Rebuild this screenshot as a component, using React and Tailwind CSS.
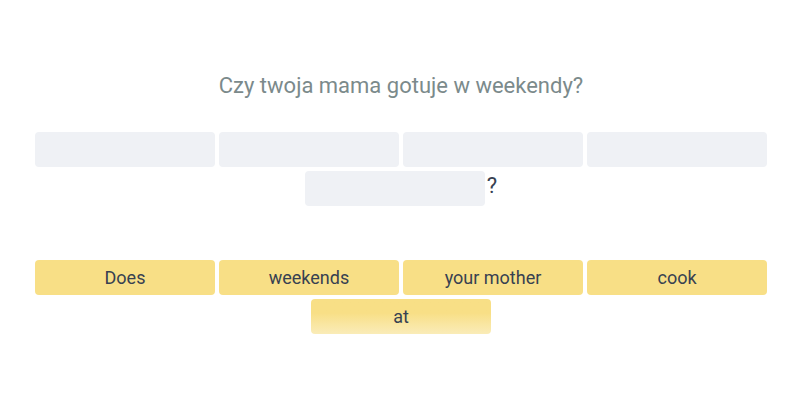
const SLOT_CLASS = "h-[35px] w-[180px] rounded-[4px] bg-[#eff1f5]";

const WORD_CLASS =
  "flex h-[35px] w-[180px] items-center justify-center rounded-[4px] text-[18px] text-[#374151]";

const words = ["Does", "weekends", "your mother", "cook"];

export default function App() {
  return (
    <div
      className="h-[400px] w-[800px] bg-white pl-[35px] pr-[33px]"
      style={{ fontFamily: "Roboto, 'Noto Sans', sans-serif" }}
    >
      <div className="pt-[71px] text-center text-[22px] leading-[30px] text-[#7b8a8b]">
        Czy twoja mama gotuje w weekendy?
      </div>

      <div className="mt-[31px] flex flex-wrap justify-center gap-[4px]">
        {[0, 1, 2, 3].map((i) => (
          <div key={i} className={SLOT_CLASS} />
        ))}
        <div className="flex items-center">
          <div className={SLOT_CLASS} />
          <span className="ml-[2px] -mt-[6px] text-[22px] leading-none text-[#374151]">?</span>
        </div>
      </div>

      <div className="mt-[54px] flex flex-wrap justify-center gap-[4px]">
        {words.map((w) => (
          <div key={w} className={`${WORD_CLASS} bg-[#f8df86]`}>
            {w}
          </div>
        ))}
        <div
          className={`${WORD_CLASS} bg-gradient-to-b from-[#f8df86] from-40% to-[#faecb8] text-[#4b5563]`}
        >
          at
        </div>
      </div>
    </div>
  );
}
